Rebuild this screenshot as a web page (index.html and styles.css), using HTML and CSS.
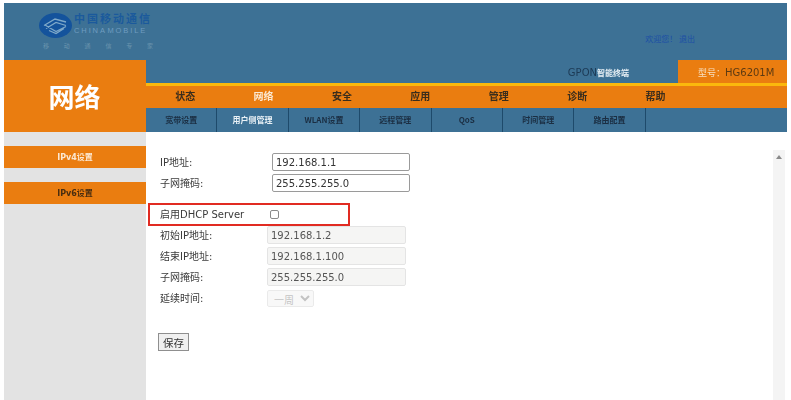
FILE: index.html
```html
<!DOCTYPE html>
<html lang="zh-CN">
<head>
<meta charset="utf-8">
<title>网络</title>
<link rel="stylesheet" href="styles.css">
</head>
<body>
<div class="frame">
  <header class="top">
    <div class="logo">
      <svg class="logo-mark" width="33" height="25" viewBox="0 0 33 25">
        <ellipse cx="16.5" cy="12.5" rx="16.5" ry="12.5" fill="#14539c"/>
        <path d="M5 12.5 16 6l11 3M7 15.5 17 9.500l10 3M6 12l11 6.500 10-5M10 17.500l7 3 8-5" fill="none" stroke="#7fa9c9" stroke-width="1.300"/>
      </svg>
      <div class="logo-text">
        <div class="logo-cn">中国移动通信</div>
        <div class="logo-en">CHINA MOBILE</div>
      </div>
      <div class="logo-slogan"><span>移</span><span>动</span><span>通</span><span>信</span><span>专</span><span>家</span></div>
    </div>
    <div class="welcome">欢迎您！ 退出</div>
  </header>
  <div class="band">
    <div class="section-title">网络</div>
    <div class="band-main">
      <div class="status-row">
        <div class="device">GPON<span class="device-cn">智能终端</span></div>
        <div class="model"><span class="model-label">型号：</span>HG6201M</div>
      </div>
      <nav class="main-nav">
        <a>状态</a><a class="active">网络</a><a>安全</a><a>应用</a><a>管理</a><a>诊断</a><a>帮助</a>
      </nav>
      <nav class="sub-nav">
        <a>宽带设置</a><a class="active">用户侧管理</a><a>WLAN设置</a><a>远程管理</a><a>QoS</a><a>时间管理</a><a>路由配置</a>
      </nav>
    </div>
  </div>
  <div class="body">
    <aside class="side">
      <a class="side-item light">IPv4设置</a>
      <a class="side-item">IPv6设置</a>
    </aside>
    <main class="content">
      <form class="form">
        <div class="group">
          <div class="row"><label>IP地址:</label><input class="field" value="192.168.1.1"></div>
          <div class="row"><label>子网掩码:</label><input class="field" value="255.255.255.0"></div>
        </div>
        <div class="dhcp"><label>启用DHCP Server</label><input class="check" type="checkbox"></div>
        <div class="group disabled-group">
          <div class="row"><label>初始IP地址:</label><input class="field off" disabled value="192.168.1.2"></div>
          <div class="row"><label>结束IP地址:</label><input class="field off" disabled value="192.168.1.100"></div>
          <div class="row"><label>子网掩码:</label><input class="field off" disabled value="255.255.255.0"></div>
          <div class="row"><label>延续时间:</label><select class="lease" disabled><option>一周</option></select></div>
        </div>
        <button class="save" type="button">保存</button>
      </form>
      <div class="scrollbar"><span class="arrow"></span></div>
    </main>
  </div>
</div>
</body>
</html>
```
FILE: styles.css
```css
* { box-sizing: border-box; }
html, body { margin: 0; padding: 0; height: 400px; overflow: hidden; background: #fff; }
body { font-family: "DejaVu Sans", "Noto Sans CJK SC", sans-serif; color: #333; }
.frame { margin: 3px 4px 0 4px; width: 783px; height: 397px; display: flex; flex-direction: column; filter: blur(.35px); }

.top { height: 57px; background: #3d7195; position: relative; flex: none; display: flex; justify-content: flex-end; }
.logo { position: absolute; left: 35px; top: 10px; width: 120px; height: 42px; }
.logo-mark { position: absolute; left: 0; top: 0; }
.logo-text { position: absolute; left: 35px; top: 1px; }
.logo-cn { font: 700 11px/11px "Liberation Sans", "Noto Sans CJK SC", sans-serif; letter-spacing: 2px; color: #1b5a9c; white-space: nowrap; }
.logo-en { font: 400 7.500px/11px "Liberation Sans", sans-serif; letter-spacing: 1.900px; color: #6f9cc0; white-space: nowrap; word-spacing: -3px; }
.logo-slogan { position: absolute; left: 4px; top: 29px; width: 110px; display: flex; justify-content: space-between; font: 400 6px/8px "Noto Sans CJK SC", sans-serif; color: #6a94ad; }
.welcome { font: 400 8px/12px "Noto Sans CJK SC", sans-serif; color: #1c4fa5; margin: 30px 92px 0 0; white-space: pre; }

.band { height: 72px; display: flex; flex: none; }
.section-title { width: 142px; background: #ea7d10; color: #fff; font: 700 26px/72px "Noto Sans CJK SC", sans-serif; text-align: center; padding-right: 1px; flex: none; }
.band-main { flex: 1; display: flex; flex-direction: column; min-width: 0; }
.status-row { height: 23px; background: #3d7195; display: flex; justify-content: flex-end; align-items: stretch; flex: none; }
.device { font: 400 10px/25px "DejaVu Sans", "Noto Sans CJK SC", sans-serif; color: #1d3a55; margin-right: 49px; }
.device-cn { font: 700 8px "Noto Sans CJK SC", sans-serif; color: #e8f0f5; }
.model { width: 109px; background: #ea7d10; color: #5d3a12; font: 400 10px/25px "DejaVu Sans", sans-serif; padding-left: 20px; white-space: nowrap; }
.model-label { font: 400 9px "Noto Sans CJK SC", sans-serif; color: #f7dfc0; }
.main-nav { height: 25px; background: #ea7d10; border-top: 3px solid #fbb80c; display: flex; flex: none; }
.main-nav a { width: 78.400px; text-align: center; font: 700 10px/19px "Noto Sans CJK SC", sans-serif; color: #3a2d1c; }
.main-nav a.active { color: #fbe9d3; }
.sub-nav { height: 24px; background: #3d7195; display: flex; flex: none; }
.sub-nav a { width: 71.400px; text-align: center; font: 700 8px/24px "Noto Sans CJK SC", "DejaVu Sans", sans-serif; color: #1b2e42; border-right: 1px solid #1e4a6b; }
.sub-nav a.active { color: #e9f1f6; }

.body { flex: 1; display: flex; min-height: 0; }
.side { width: 142px; background: #e3e3e3; padding-top: 14px; display: flex; flex-direction: column; gap: 14px; flex: none; }
.side-item { height: 22px; background: #ea7d10; text-align: center; font: 700 8px/23px "DejaVu Sans", "Noto Sans CJK SC", sans-serif; color: #4a2e10; }
.side-item.light { color: #fbe8d2; }

.content { flex: 1; position: relative; min-width: 0; }
.form { padding: 21px 0 0 2px; display: flex; flex-direction: column; align-items: flex-start; }
.group { display: flex; flex-direction: column; gap: 3px; padding-left: 12px; }
.row { display: flex; align-items: center; height: 18px; }
label { font: 400 10px/18px "DejaVu Sans", "Noto Sans CJK SC", sans-serif; color: #3a3a3a; white-space: nowrap; padding-top: 1px; }
.row label { width: 112px; }
.field { width: 138px; height: 18px; border: 1px solid #9a9a9a; border-radius: 2px; padding: 0 3px; font: 400 10px "DejaVu Sans", sans-serif; color: #333; background: #fff; }
.disabled-group { gap: 3px; margin-top: 0; }
.disabled-group .row label { width: 107px; }
.field.off { border-color: #e4e4e4; background: #f5f5f4; color: #555; width: 139px; }
.lease { width: 47px; height: 17px; font: 400 10px "Noto Sans CJK SC", sans-serif; color: #aaa; background: #f6f6f6; border: 1px solid #e2e2e2; border-radius: 2px; padding: 0 0 0 2px; }
.dhcp { margin-top: 11px; width: 202px; height: 23px; border: 2px solid #e12b22; padding-left: 10px; display: flex; align-items: center; }
.dhcp label { width: 110px; }
.check { appearance: none; width: 9px; height: 9px; margin: 0; border: 1px solid #8a8a8a; border-radius: 2px; background: #fff; }
.save { margin: 26px 0 0 10px; width: 31px; height: 18px; padding: 0; font: 400 10.500px "Noto Sans CJK SC", sans-serif; color: #333; background: #f0f0f0; border: 1px solid #8f8f8f; border-radius: 0; }
.scrollbar { position: absolute; left: 627px; top: 18px; bottom: 0; width: 12px; background: #f4f4f4; }
.arrow { display: block; margin: 5px auto 0; width: 0; height: 0; border-left: 3px solid transparent; border-right: 3px solid transparent; border-bottom: 4px solid #8a8a8a; }
```
